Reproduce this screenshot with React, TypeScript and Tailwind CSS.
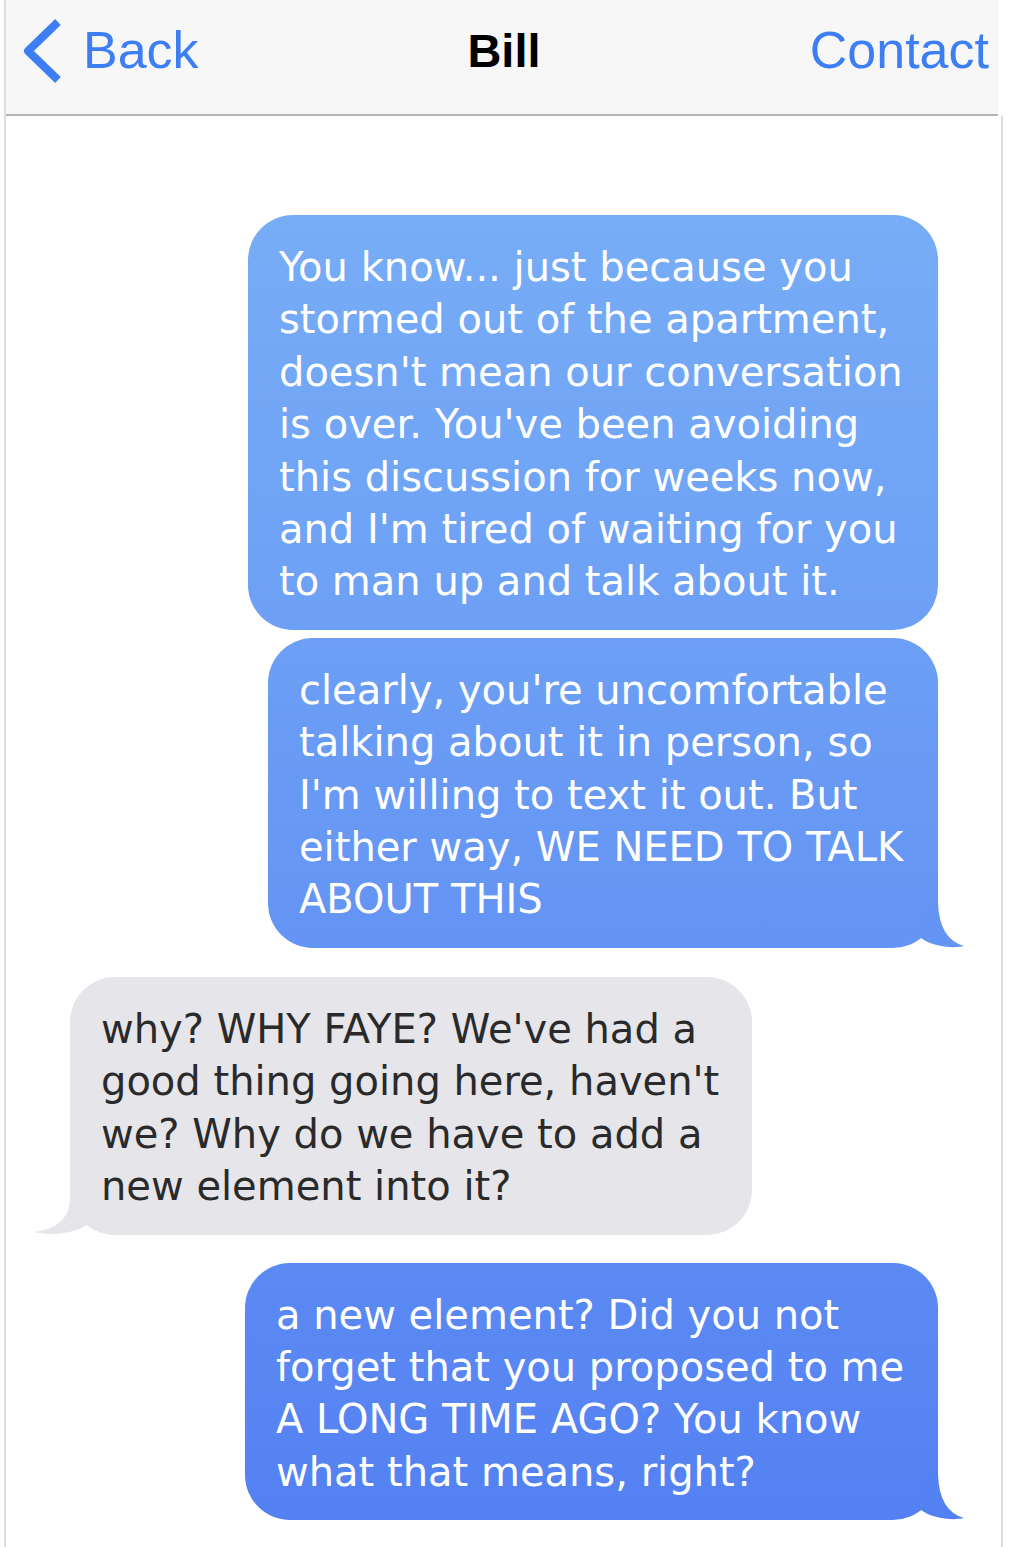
import React from "react";

type Msg = {
  from: "me" | "them";
  lines: string[];
  width: string;
  bg: string;
  tail?: string;
  gap: string;
};

const messages: Msg[] = [
  {
    from: "me",
    lines: [
      "You know... just because you",
      "stormed out of the apartment,",
      "doesn't mean our conversation",
      "is over. You've been avoiding",
      "this discussion for weeks now,",
      "and I'm tired of waiting for you",
      "to man up and talk about it.",
    ],
    width: "w-[690px]",
    bg: "bg-linear-to-b from-[#77acf6] to-[#6da0f5] text-white",
    gap: "mt-[99px]",
  },
  {
    from: "me",
    lines: [
      "clearly, you're uncomfortable",
      "talking about it in person, so",
      "I'm willing to text it out. But",
      "either way, WE NEED TO TALK",
      "ABOUT THIS",
    ],
    width: "w-[670px]",
    bg: "bg-linear-to-b from-[#6c9ff5] to-[#6494f4] text-white",
    tail: "#6494f4",
    gap: "mt-[8px]",
  },
  {
    from: "them",
    lines: [
      "why? WHY FAYE? We've had a",
      "good thing going here, haven't",
      "we? Why do we have to add a",
      "new element into it?",
    ],
    width: "w-[682px]",
    bg: "bg-[#e5e5ea] text-[#2a2a2a]",
    tail: "#e5e5ea",
    gap: "mt-[29px]",
  },
  {
    from: "me",
    lines: [
      "a new element? Did you not",
      "forget that you proposed to me",
      "A LONG TIME AGO? You know",
      "what that means, right?",
    ],
    width: "w-[693px]",
    bg: "bg-linear-to-b from-[#5c8af3] to-[#5481f2] text-white",
    tail: "#5481f2",
    gap: "mt-[28px]",
  },
];

// little curled tail under the last bubble of a run
function SentTail({ fill }: { fill: string }) {
  return (
    <svg
      className="absolute right-[-26px] bottom-0 h-[56px] w-[50px]"
      viewBox="0 0 50 56"
    >
      <path d="M24 0 L24 10 Q25 47 50 54 C38 57 17 54 7 46 L7 20 Q16 14 24 0 Z" fill={fill} />
    </svg>
  );
}

function ReceivedTail({ fill }: { fill: string }) {
  return (
    <svg
      className="absolute left-[-36px] bottom-0 h-[56px] w-[56px]"
      viewBox="0 0 56 56"
    >
      <path d="M36 0 L36 19 Q36 48 1 53 C13 57 40 55 53 46 L53 20 Q44 14 36 0 Z" fill={fill} />
    </svg>
  );
}

function Bubble({ msg }: { msg: Msg }) {
  const mine = msg.from === "me";
  return (
    <div className={`${msg.gap} flex w-full ${mine ? "justify-end pr-[63px]" : "justify-start pl-[64px]"}`}>
      <div
        className={`relative ${msg.width} rounded-[45px] ${msg.bg} pl-[31px] pt-[26px] pb-[22px] text-[40px] leading-[52.4px] whitespace-nowrap`}
        style={{ fontFamily: '"DejaVu Sans", Verdana, sans-serif' }}
      >
        {msg.tail && (mine ? <SentTail fill={msg.tail} /> : <ReceivedTail fill={msg.tail} />)}
        <p className="relative">
          {msg.lines.map((l, i) => (
            <React.Fragment key={i}>
              {l}
              {i < msg.lines.length - 1 && <br />}
            </React.Fragment>
          ))}
        </p>
      </div>
    </div>
  );
}

export default function App() {
  return (
    <div className="min-h-[1547px] w-full bg-white">
      <div className="ml-[4px] min-h-[1547px] w-[999px] border-l-2 border-[#dcdcdc]">
        <header
          className="grid h-[116px] w-[992px] grid-cols-3 items-center border-b-2 border-[#b4b4b4] bg-[#f7f7f7] pb-[14px]"
          style={{ fontFamily: '"Liberation Sans", Arial, sans-serif' }}
        >
          <div className="flex items-center pl-[15px] text-[#3e7ef5]">
            <svg width="42" height="64" viewBox="0 0 42 64" className="mt-[2px]">
              <path
                d="M37 3 L7 32 L37 61"
                fill="none"
                stroke="#3e7ef5"
                strokeWidth="8"
                strokeLinejoin="round"
              />
            </svg>
            <span className="ml-[20px] text-[52px] leading-none">Back</span>
          </div>
          <div className="flex justify-center">
            <span className="pl-[4px] text-[47px] leading-none font-bold text-black">Bill</span>
          </div>
          <div className="flex justify-end pr-[9px]">
            <span className="text-[52px] leading-none text-[#3e7ef5]">Contact</span>
          </div>
        </header>
        <main className="flex min-h-[1431px] flex-col border-r-2 border-[#dcdcdc] pb-[24px]">
          {messages.map((m, i) => (
            <Bubble key={i} msg={m} />
          ))}
        </main>
      </div>
    </div>
  );
}
